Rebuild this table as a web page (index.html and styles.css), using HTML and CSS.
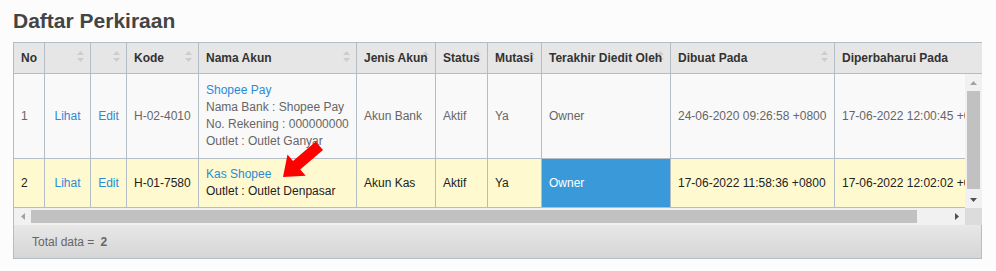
FILE: index.html
```html
<!DOCTYPE html>
<html lang="id">
<head>
<meta charset="utf-8">
<title>Daftar Perkiraan</title>
<link rel="stylesheet" href="styles.css">
</head>
<body>
<div class="page">
  <h1 class="title">Daftar Perkiraan</h1>
  <div class="grid">
    <div class="grid-head">
      <div class="row head-row">
        <div class="cell">No</div>
        <div class="cell"><svg class="sort" viewBox="0 0 7 11"><polygon points="0,4 3.5,0 7,4"/><polygon points="0,7 7,7 3.5,11"/></svg></div>
        <div class="cell"><svg class="sort" viewBox="0 0 7 11"><polygon points="0,4 3.5,0 7,4"/><polygon points="0,7 7,7 3.5,11"/></svg></div>
        <div class="cell"><svg class="sort" viewBox="0 0 7 11"><polygon points="0,4 3.5,0 7,4"/><polygon points="0,7 7,7 3.5,11"/></svg><span class="label">Kode</span></div>
        <div class="cell"><svg class="sort" viewBox="0 0 7 11"><polygon points="0,4 3.5,0 7,4"/><polygon points="0,7 7,7 3.5,11"/></svg><span class="label">Nama Akun</span></div>
        <div class="cell"><svg class="sort" viewBox="0 0 7 11"><polygon points="0,4 3.5,0 7,4"/><polygon points="0,7 7,7 3.5,11"/></svg><span class="label">Jenis Akun</span></div>
        <div class="cell"><svg class="sort" viewBox="0 0 7 11"><polygon points="0,4 3.5,0 7,4"/><polygon points="0,7 7,7 3.5,11"/></svg><span class="label">Status</span></div>
        <div class="cell"><svg class="sort" viewBox="0 0 7 11"><polygon points="0,4 3.5,0 7,4"/><polygon points="0,7 7,7 3.5,11"/></svg><span class="label">Mutasi</span></div>
        <div class="cell"><svg class="sort" viewBox="0 0 7 11"><polygon points="0,4 3.5,0 7,4"/><polygon points="0,7 7,7 3.5,11"/></svg><span class="label">Terakhir Diedit Oleh</span></div>
        <div class="cell"><svg class="sort" viewBox="0 0 7 11"><polygon points="0,4 3.5,0 7,4"/><polygon points="0,7 7,7 3.5,11"/></svg><span class="label">Dibuat Pada</span></div>
        <div class="cell"><svg class="sort" viewBox="0 0 7 11"><polygon points="0,4 3.5,0 7,4"/><polygon points="0,7 7,7 3.5,11"/></svg><span class="label">Diperbaharui Pada</span></div>
      </div>
    </div>
    <div class="grid-mid">
      <div class="viewport">
        <div class="row row-a">
          <div class="cell">1</div>
          <div class="cell center"><span class="link">Lihat</span></div>
          <div class="cell center"><span class="link">Edit</span></div>
          <div class="cell">H-02-4010</div>
          <div class="cell">
            <span class="link">Shopee Pay</span>
            <span>Nama Bank : Shopee Pay</span>
            <span>No. Rekening : 000000000</span>
            <span>Outlet : Outlet Ganyar</span>
          </div>
          <div class="cell">Akun Bank</div>
          <div class="cell">Aktif</div>
          <div class="cell">Ya</div>
          <div class="cell">Owner</div>
          <div class="cell">24-06-2020 09:26:58 +0800</div>
          <div class="cell">17-06-2022 12:00:45 +0800</div>
        </div>
        <div class="row row-b">
          <div class="cell">2</div>
          <div class="cell center"><span class="link">Lihat</span></div>
          <div class="cell center"><span class="link">Edit</span></div>
          <div class="cell">H-01-7580</div>
          <div class="cell">
            <span class="link">Kas Shopee</span>
            <span>Outlet : Outlet Denpasar</span>
          </div>
          <div class="cell">Akun Kas</div>
          <div class="cell">Aktif</div>
          <div class="cell">Ya</div>
          <div class="cell sel">Owner</div>
          <div class="cell">17-06-2022 11:58:36 +0800</div>
          <div class="cell">17-06-2022 12:02:02 +0800</div>
        </div>
      </div>
      <div class="vbar">
        <div class="sb-btn"><svg class="sb-ico off" viewBox="0 0 7 4"><polygon points="0,4 3.5,0 7,4"/></svg></div>
        <div class="vtrack"><div class="vthumb"></div></div>
        <div class="sb-btn"><svg class="sb-ico" viewBox="0 0 7 4"><polygon points="0,0 7,0 3.5,4"/></svg></div>
      </div>
    </div>
    <div class="grid-hbar">
      <div class="hbar">
        <div class="sb-btn"><svg class="sb-ico-h off" viewBox="0 0 4 7"><polygon points="4,0 4,7 0,3.5"/></svg></div>
        <div class="htrack"><div class="hthumb"></div></div>
        <div class="sb-btn"><svg class="sb-ico-h" viewBox="0 0 4 7"><polygon points="0,0 4,3.5 0,7"/></svg></div>
      </div>
      <div class="corner"></div>
    </div>
    <div class="grid-foot">Total data = <b class="total">2</b></div>
  </div>
  <svg class="annot" viewBox="280 138 46 42" aria-hidden="true">
    <polygon points="283,177 305.7,175.8 300.2,169.4 323,149.9 315.8,141.5 293,161 287.5,154.6"/>
  </svg>
</div>
</body>
</html>
```
FILE: styles.css
```css
body {
  margin: 0;
  background: #fcfcfc;
  font-family: "Liberation Sans", Arial, sans-serif;
  font-size: 12px;
}

.page {
  position: relative;
  width: 996px;
  height: 271px;
}

.title {
  margin: 0 0 9px 0;
  padding: 9px 0 0 13px;
  font-size: 21px;
  line-height: 24px;
  font-weight: bold;
  color: #444;
}

.grid {
  margin-left: 13px;
  width: 969px;
  box-sizing: border-box;
  border-left: 1px solid #b4bcc4;
  border-top: 1px solid #b4bcc4;
}

.grid-head {
  overflow: hidden;
  width: 968px;
}

.row {
  display: grid;
  grid-template-columns: 31px 46px 36px 72px 158px 79px 52px 54px 129px 164px 165px;
  width: 986px;
}

.cell {
  box-sizing: border-box;
  border-right: 1px solid #b4bcc4;
  border-bottom: 1px solid #b4bcc4;
  padding: 0 7px;
  display: flex;
  flex-direction: column;
  justify-content: center;
  white-space: nowrap;
  line-height: 17px;
  overflow: hidden;
}

.cell.center {
  align-items: center;
  padding: 0;
}

.head-row {
  height: 31px;
}

.head-row .cell {
  position: relative;
  background: #e6e6e6;
  font-weight: bold;
  color: #333;
}

.label {
  position: relative;
}

.sort {
  position: absolute;
  right: 6px;
  top: 8px;
  width: 7px;
  height: 11px;
  fill: #cdcdcd;
}

.grid-mid {
  display: flex;
  height: 134px;
}

.viewport {
  width: 951px;
  overflow: hidden;
}

.row-a {
  height: 85px;
  background: #f9f9f9;
  color: #666;
}

.row-b {
  height: 49px;
  background: #fff9d0;
  color: #222;
}

.link {
  color: #2a8bd6;
}

.cell.sel {
  background: #3a9ad9;
  color: #fff;
}

.vbar {
  width: 17px;
  display: flex;
  flex-direction: column;
  background: #f1f1f1;
}

.sb-btn {
  width: 17px;
  height: 17px;
  flex: none;
  display: flex;
  align-items: center;
  justify-content: center;
}

.sb-ico {
  width: 7px;
  height: 4px;
  fill: #505050;
}

.sb-ico-h {
  width: 4px;
  height: 7px;
  fill: #505050;
}

.sb-ico.off,
.sb-ico-h.off {
  fill: #a3a3a3;
}

.vtrack {
  flex: 1;
}

.vthumb {
  margin-left: 2px;
  width: 13px;
  height: 98px;
  background: #c1c1c1;
}

.grid-hbar {
  display: flex;
  height: 17px;
}

.hbar {
  width: 951px;
  display: flex;
  background: #f1f1f1;
}

.htrack {
  flex: 1;
}

.hthumb {
  margin-top: 2px;
  width: 886px;
  height: 13px;
  background: #c1c1c1;
}

.corner {
  width: 17px;
  background: #dcdcdc;
}

.grid-foot {
  box-sizing: border-box;
  width: 968px;
  height: 34px;
  border-right: 1px solid #b4bcc4;
  border-bottom: 1px solid #b4bcc4;
  background: linear-gradient(#e7e7e7, #d6d6d6);
  padding-left: 18px;
  display: flex;
  align-items: center;
  color: #666;
}

.total {
  margin-left: 6px;
}

.annot {
  position: absolute;
  left: 280px;
  top: 138px;
  width: 46px;
  height: 42px;
  fill: #ff0000;
}
```
